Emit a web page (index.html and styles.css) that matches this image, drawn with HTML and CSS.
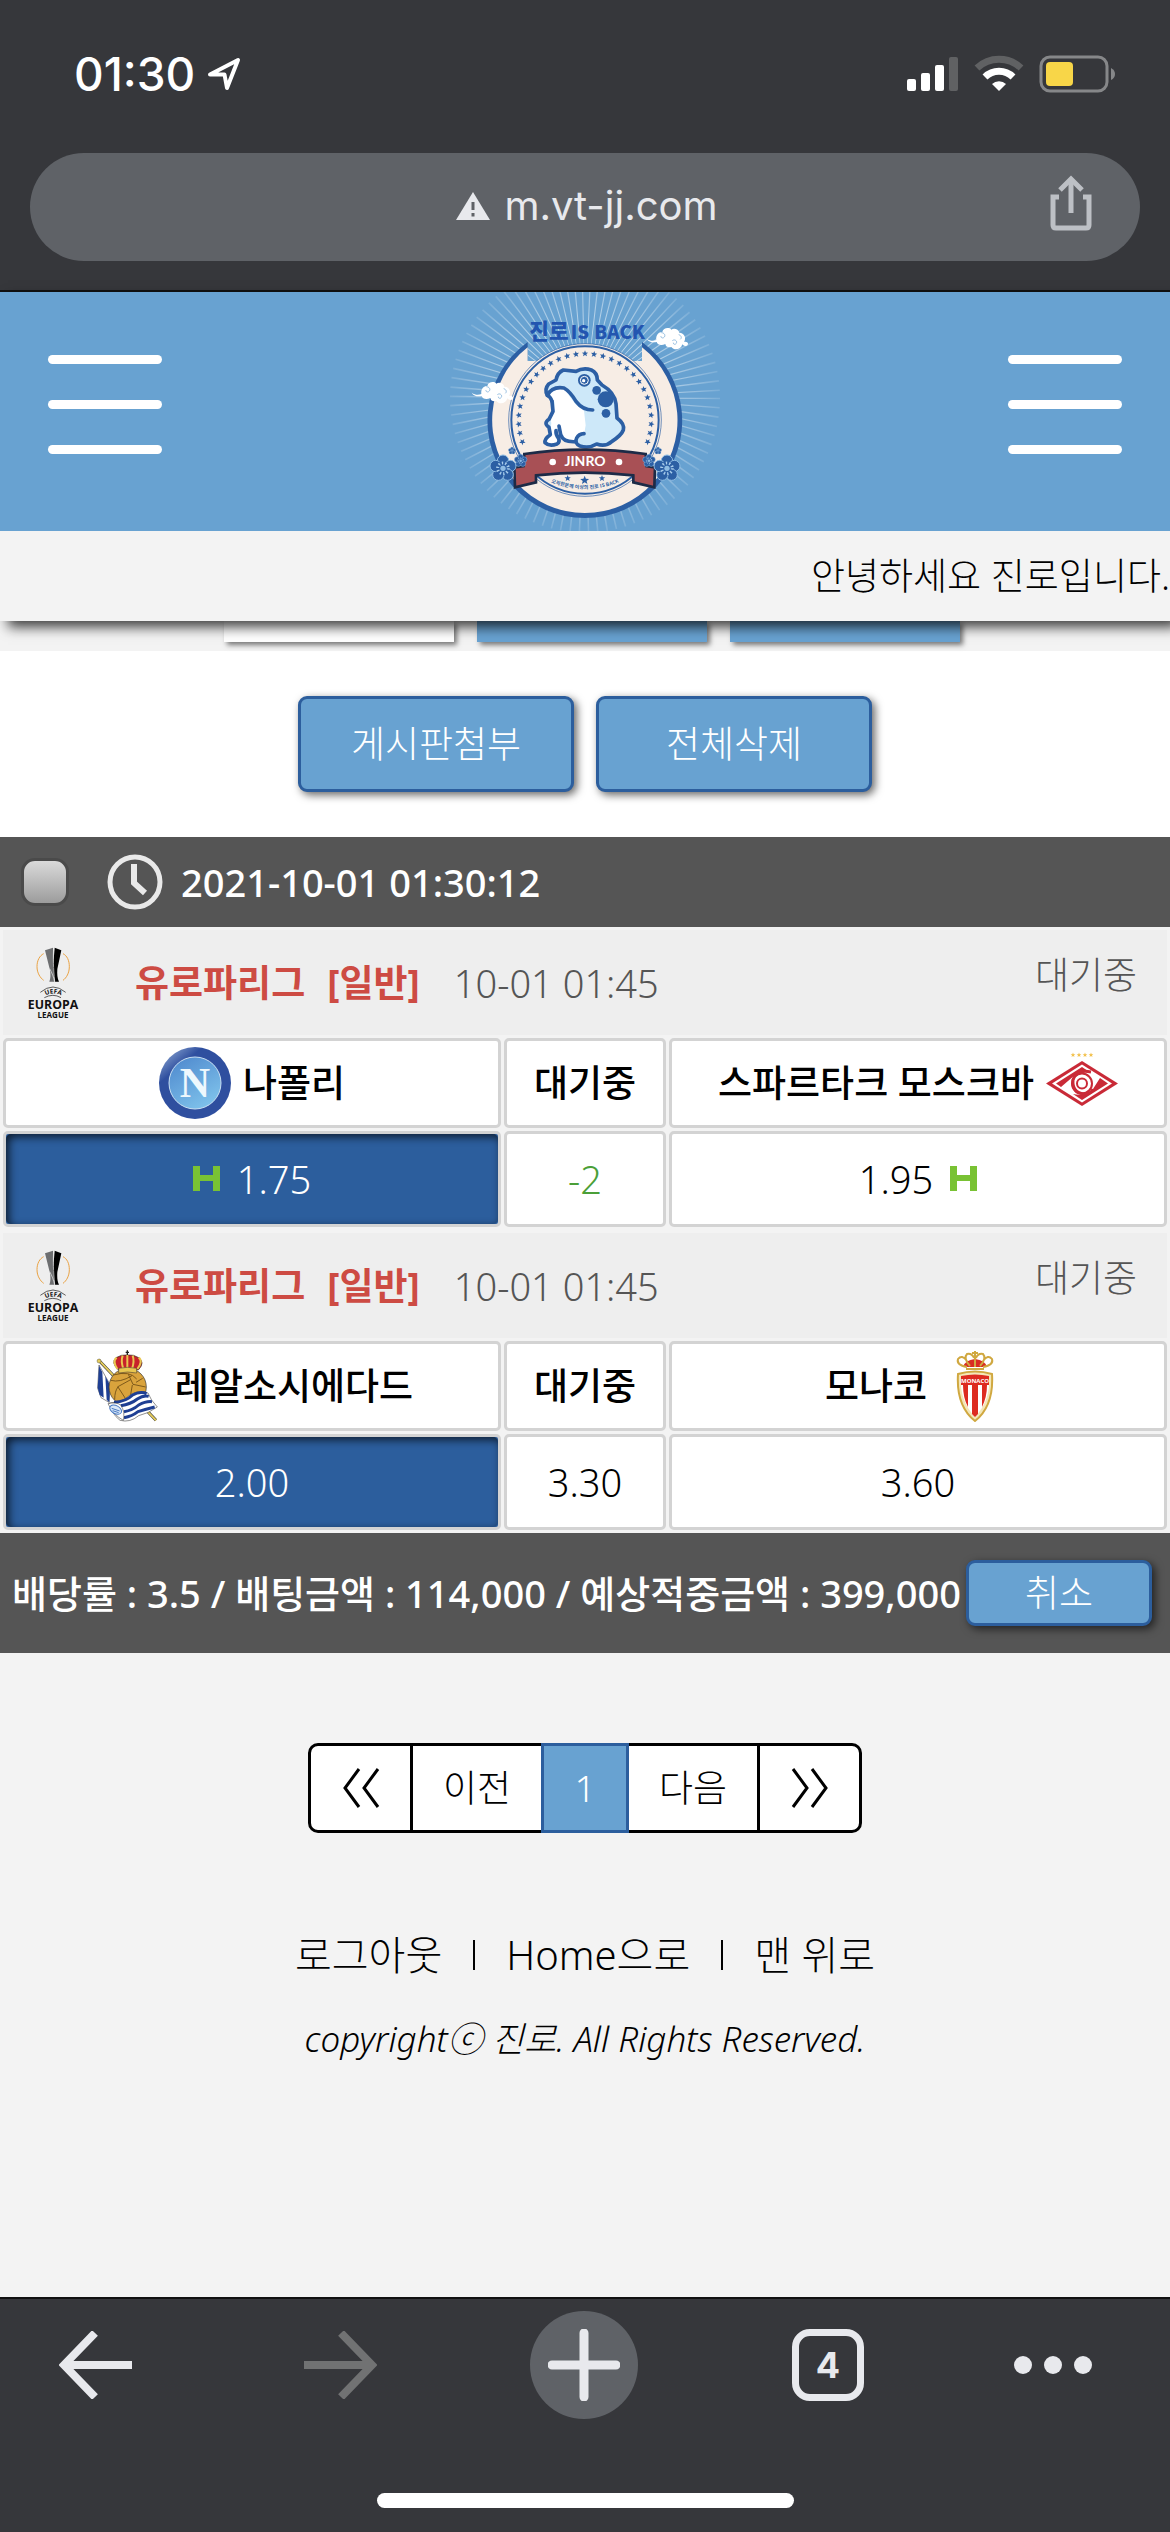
FILE: index.html
```
<!DOCTYPE html>
<html lang="ko">
<head>
<meta charset="utf-8">
<meta name="viewport" content="width=device-width, initial-scale=1">
<title>진로</title>
<link rel="stylesheet" href="styles.css">
</head>
<body>

<svg class="defs" width="0" height="0">
  <defs>
    <path id="star" d="M0-10 L2.6-3.4 9.5-3.1 4.1 1.3 5.9 8.1 0 4.3-5.9 8.1-4.1 1.3-9.5-3.1-2.6-3.4Z"/>
    <g id="stars7">
      <use href="#star" transform="rotate(7.8) translate(0 -199)"/>
      <use href="#star" transform="rotate(15.6) translate(0 -199)"/>
      <use href="#star" transform="rotate(23.4) translate(0 -199)"/>
      <use href="#star" transform="rotate(31.2) translate(0 -199)"/>
      <use href="#star" transform="rotate(39) translate(0 -199)"/>
      <use href="#star" transform="rotate(46.8) translate(0 -199)"/>
      <use href="#star" transform="rotate(54.6) translate(0 -199)"/>
    </g>
    <g id="flower">
      <g fill="#2c5fa4" stroke="#8fbce3" stroke-width="3">
        <circle cx="0" cy="-23" r="17"/>
        <circle cx="22" cy="-7" r="17"/>
        <circle cx="14" cy="19" r="17"/>
        <circle cx="-14" cy="19" r="17"/>
        <circle cx="-22" cy="-7" r="17"/>
      </g>
      <circle r="22" fill="#2c5fa4"/>
      <circle r="16" fill="none" stroke="#a9cdec" stroke-width="9" stroke-dasharray="4 6"/>
      <circle r="8" fill="#8fbce3"/>
    </g>
    <g id="cloud">
      <path fill="#fff" d="M620 146c10 7 20 8 29 4-2-14 6-24 18-24 2-11 19-16 27-7 7-6 22-2 24 9 15 0 22 16 14 28 12-3 16 8 8 11-7 2-11-1-13-4-4 16-24 20-33 8-9 3-17-1-18-9-12 6-24 2-26-6-12 3-24 0-30-10z"/>
      <path fill="none" stroke="#68a2d1" stroke-width="2" d="M664 128c9 0 13 8 9 13s-11 3-10-3M697 152c7-6 16 1 12 8-3 5-10 3-9-2M716 134c8 2 10 10 5 14"/>
    </g>
    <g id="europa">
      <path fill="none" stroke="#eaa243" stroke-width="3" d="M74 51c-12 6-20 20-20 39s10 34 20 41M132 51c12 6 19 20 19 39s-9 34-19 41"/>
      <path fill="#6d6e70" d="M78 41l24-8 2 60 2 42h-15c4-10 4-20 2-34z"/>
      <path fill="#000" d="M107 33l20 8-12 56c-1 16 0 28 5 38h-13l-5-42z"/>
      <path fill="none" stroke="#eee" stroke-width="2" d="M92 96c7 12 12 26 15 40M104 34c-2 30-1 60 3 100"/>
      <path fill="none" stroke="#111" stroke-width="2" d="M64 167q38-32 76 0M76 183q26-14 50 0"/>
      <g fill="#111" font-family="Open Sans" font-weight="700" text-anchor="middle">
        <path id="uefaArc" fill="none" d="M70 182q33-23 66 0"/>
        <text font-size="19"><textPath href="#uefaArc" startOffset="50%">UEFA</textPath></text>
        <text x="102" y="218" font-size="37">EUROPA</text>
        <text x="102" y="243" font-size="24">LEAGUE</text>
      </g>
    </g>
    <path id="handicap" fill="#79c234" d="M0 0h7v9h13V0h7v25h-7V15H7v10H0z"/>
  </defs>
</svg>

<div class="browser-top">
  <div class="status">
    <div class="clock">01:30
      <svg width="34" height="34" viewBox="0 0 34 34"><path d="M3 17.500 31 3 20 31 17.500 17.500z" fill="none" stroke="#fff" stroke-width="4" stroke-linejoin="round"/></svg>
    </div>
    <svg width="210" height="40" viewBox="906 54 210 40">
      <g fill="#fff">
        <rect x="907" y="79" width="9" height="12" rx="2"/>
        <rect x="921" y="73" width="9" height="18" rx="2"/>
        <rect x="935" y="65" width="9" height="26" rx="2"/>
        <rect x="949" y="57" width="9" height="34" rx="2" fill="#606163"/>
        <path d="M999 91l-7-7a10 10 0 0 1 14 0z"/>
      </g>
      <path fill="none" stroke="#606163" stroke-width="7" d="M977 68a32 32 0 0 1 44 0"/>
      <path fill="none" stroke="#fff" stroke-width="7" d="M985 77a20 20 0 0 1 28 0"/>
      <rect x="1041" y="57" width="66" height="34" rx="9" fill="none" stroke="#868789" stroke-width="3"/>
      <rect x="1046" y="62" width="27" height="24" rx="4" fill="#f8d648"/>
      <path fill="#868789" d="M1111 68q4 2 4 6t-4 6z"/>
    </svg>
  </div>
  <div class="urlbar">
    <div class="url">
      <svg width="34" height="30" viewBox="0 0 34 30"><path d="M17 1 34 29H0z" fill="#e8e9ed"/><path d="M15.500 11h3v8h-3zM15.500 22h3v3.500h-3z" fill="#5f6267"/></svg>
      <span>m.vt-jj.com</span>
    </div>
    <button class="share">
      <svg width="42" height="56" viewBox="0 0 42 56"><g fill="none" stroke="#bdc0c5" stroke-width="5"><path d="M9 22H3v28q0 3 3 3h30q3 0 3-3V22h-6M21 38V6"/><path d="M10 15 21 4l11 11"/></g></svg>
    </button>
  </div>
</div>

<header>
  <div class="gnb">
    <button class="menu"><i></i><i></i><i></i></button>
    <a href="#" class="logo">
      <svg width="300" height="239" viewBox="-15 6 900 717">
        <defs>
          <radialGradient id="ray" gradientUnits="userSpaceOnUse" cx="435" cy="323" r="410">
            <stop offset=".5" stop-color="#fff" stop-opacity=".6"/>
            <stop offset="1" stop-color="#fff" stop-opacity=".12"/>
          </radialGradient>
        </defs>
        <circle cx="435" cy="323" r="275" fill="none" stroke="url(#ray)" stroke-width="260" pathLength="720" stroke-dasharray="1.4 6.6"/>
        <path d="M263 156A292 292 0 1 0 606 156V213H263z" fill="#2c5fa4"/>
        <path d="M263 172A278 278 0 1 0 606 172V213H263z" fill="#f7ede5"/>
        <circle cx="435" cy="390" r="229" fill="#f7ede5" stroke="#2c5fa4" stroke-width="2"/>
        <circle cx="435" cy="390" r="221" fill="none" stroke="#2c5fa4" stroke-width="6"/>
        <g fill="#2355b0" font-family="Noto Sans CJK KR" font-weight="900">
          <text x="268" y="148" font-size="64">진로</text>
          <text x="392" y="146" font-size="56">IS BACK</text>
        </g>
        <g fill="#2c5fa4" transform="translate(435 390)">
          <use href="#star" y="-199"/>
          <use href="#stars7"/>
          <use href="#stars7" transform="rotate(54.6)"/>
          <g transform="scale(-1 1)">
            <use href="#stars7"/>
            <use href="#stars7" transform="rotate(54.6)"/>
          </g>
        </g>
        <!-- toad -->
        <path fill="#cde8f9" d="M318 302q-3-14 8-21l20-10q6-24 24-30l40 3q22-12 46-3 16 8 16 30l12 16q38 20 44 56l2 40q26 16 22 38-6 16-32 34-20 16-46 8-22 14-50 6-12-4-14-12-24 4-42-10l-14-40-4 32q12 12 5 20-15 10-37 2-6-14 6-26l4-28q-12-12-4-26l14-6 2-44z"/>
        <path fill="#fff" d="M328 310q18-22 46-14 12 20 34 48l24 18 5 44-4 24-25 20q-24 4-42-10l-10-40-6 40q8 10 0 18-14 8-28 0-3-10 8-20l4-40-8-24 16-6 2-30z"/>
        <g fill="none" stroke="#2c5fa4" stroke-width="11" stroke-linecap="round" stroke-linejoin="round">
          <path d="M336 334q-4-14-14-18-10-18 4-34l22-12q4-22 22-30l38 4q22-12 46-4 18 8 18 30l14 15q38 22 42 56l3 43q24 18 19 36-6 16-34 34-20 18-46 8-22 14-50 6-18-8-10-24 6-12 22-13"/>
          <path d="M322 316q14-28 50-22 18 10 36 40 20 26 50 26M336 334l3 30-12 24q-18 12 0 24l4 22q-18 12-16 24 12 12 36 4 10-6 4-18-8-10-7-22M357 408l5 26q8 24 46 21"/>
        </g>
        <g fill="#2c5fa4">
          <circle cx="470" cy="301" r="13"/>
          <circle cx="497" cy="328" r="24"/>
          <circle cx="498" cy="370" r="13"/>
          <circle cx="433" cy="271" r="19"/>
          <circle cx="433" cy="271" r="12" stroke="#fff" stroke-width="3"/>
          <circle cx="431" cy="272" r="5" fill="#fff"/>
        </g>
        <path fill="#a85055" stroke="#1d2b47" stroke-width="8" d="M253 492q182-26 364 0l2 36 26 4-2 60-63-15v-21q-146-16-292 0v21l-63 15-2-60 28-4z"/>
        <text x="435" y="529" fill="#fff" font-family="Lato" font-weight="700" font-size="42" text-anchor="middle">JINRO</text>
        <circle cx="338" cy="516" r="10" fill="#fff"/>
        <circle cx="537" cy="516" r="10" fill="#fff"/>
        <g fill="#2c5fa4">
          <use href="#star" x="383" y="565"/>
          <use href="#star" transform="translate(434 571) scale(1.4)"/>
          <use href="#star" x="486" y="565"/>
          <path id="motto" fill="none" d="M325 574q110 46 220 0"/>
          <text font-family="Noto Sans CJK KR" font-weight="700" font-size="15" text-anchor="middle"><textPath href="#motto" startOffset="50%">오직한분께 이상의 진로 IS BACK</textPath></text>
        </g>
        <use href="#flower" x="189" y="535"/>
        <use href="#flower" x="681" y="535"/>
        <use href="#flower" transform="translate(242 512) scale(.48)"/>
        <use href="#flower" transform="translate(627 512) scale(.48)"/>
        <use href="#flower" transform="translate(216 482) scale(.28)"/>
        <use href="#flower" transform="translate(654 482) scale(.28)"/>
        <use href="#cloud"/>
        <use href="#cloud" x="-525" y="162"/>
      </svg>
    </a>
    <button class="menu"><i></i><i></i><i></i></button>
  </div>
  <div class="notice">안녕하세요 진로입니다.</div>
</header>

<main>
  <nav class="tabs">
    <a href="#" class="on"></a>
    <a href="#"></a>
    <a href="#"></a>
  </nav>

  <div class="actions">
    <button class="btn">게시판첨부</button>
    <button class="btn">전체삭제</button>
  </div>

  <section class="slip">
    <div class="slip-head">
      <label>
        <input type="checkbox">
        <svg width="56" height="56" viewBox="0 0 56 56"><g fill="none" stroke="#e9e9e9" stroke-width="5"><circle cx="28" cy="28" r="25"/><path d="M27 10v19l11 10" stroke-width="6"/></g></svg>
        <span>2021-10-01 01:30:12</span>
      </label>
    </div>

    <table class="match">
      <colgroup><col><col class="mid"><col></colgroup>
      <tr>
        <th colspan="3" class="league">
          <div>
            <svg width="60" height="76" viewBox="15 25 180 228"><use href="#europa"/></svg>
            <strong>유로파리그</strong>
            <strong>[일반]</strong>
            <span class="when">10-01 01:45</span>
            <span class="state">대기중</span>
          </div>
        </th>
      </tr>
      <tr class="teams">
        <td>
          <div>
            <svg width="72" height="72" viewBox="0 0 72 72">
              <defs>
                <linearGradient id="nap" x2=".6" y2="1"><stop offset="0" stop-color="#4c86cc"/><stop offset="1" stop-color="#7dc0ea"/></linearGradient>
                <linearGradient id="napRim" x2=".5" y2=".6"><stop offset=".1" stop-color="#8ea9d3"/><stop offset=".5" stop-color="#2f4f9f"/></linearGradient>
              </defs>
              <circle cx="36" cy="36" r="36" fill="url(#napRim)"/>
              <circle cx="36" cy="36" r="26" fill="url(#nap)" stroke="#c9dff2" stroke-width="1"/>
              <text x="36" y="50" fill="#eef8fd" font-family="Liberation Serif" font-weight="700" font-size="42" text-anchor="middle">N</text>
            </svg>
            나폴리
          </div>
        </td>
        <td>대기중</td>
        <td>
          <div>
            스파르타크 모스크바
            <svg width="72" height="72" viewBox="0 0 72 72">
              <path fill="#c92a37" d="M36 14 72 36.500 36 59 0 36.500z"/>
              <path fill="#fff" d="M36 17.500 66 36.500 36 55.500 6 36.500z"/>
              <path fill="#c92a37" d="M10 36.500 36 20l9 6q-11-3-16 2L15 40zM27 47q12 3 20-5l7-11 8 5.500L36 53z"/>
              <circle cx="36" cy="36.500" r="10" fill="#fff" stroke="#c92a37" stroke-width="2"/>
              <path fill="none" stroke="#c92a37" stroke-width="3" d="M45 25q-15-3-18 8-1 13 11 14 7 0 9-5"/>
              <circle cx="36" cy="36.500" r="5" fill="none" stroke="#c92a37" stroke-width="2"/>
              <g fill="#f2c04a"><use href="#star" transform="translate(27 8) scale(.25)"/><use href="#star" transform="translate(33 8) scale(.25)"/><use href="#star" transform="translate(39 8) scale(.25)"/><use href="#star" transform="translate(45 8) scale(.25)"/></g>
            </svg>
          </div>
        </td>
      </tr>
      <tr class="odds">
        <td class="picked"><div><svg width="32" height="26" viewBox="0 0 32 26"><use href="#handicap"/></svg>1.75</div></td>
        <td class="line">-2</td>
        <td><div>1.95<svg width="32" height="26" viewBox="-5 0 32 26"><use href="#handicap"/></svg></div></td>
      </tr>
    </table>

    <table class="match">
      <colgroup><col><col class="mid"><col></colgroup>
      <tr>
        <th colspan="3" class="league">
          <div>
            <svg width="60" height="76" viewBox="15 25 180 228"><use href="#europa"/></svg>
            <strong>유로파리그</strong>
            <strong>[일반]</strong>
            <span class="when">10-01 01:45</span>
            <span class="state">대기중</span>
          </div>
        </th>
      </tr>
      <tr class="teams">
        <td>
          <div>
            <svg width="72" height="72" viewBox="33 37 216 216">
              <path d="M55 66 228 248" stroke="#333" stroke-width="9"/>
              <path d="M55 66 228 248" stroke="#e6cd5c" stroke-width="6"/>
              <circle cx="57" cy="70" r="6" fill="#e6cd5c" stroke="#333"/>
              <path fill="#fff" stroke="#222" stroke-width="1.500" d="M57 82l34 60-4 52-24-14-10-28z"/>
              <path fill="#1f3f93" d="M57 84l10 20 4 76-12-8-6-22zM76 116l14 26-2 52-8-8z"/>
              <circle cx="143" cy="148" r="56" fill="#d9a33c" stroke="#333" stroke-width="2"/>
              <path fill="none" stroke="#6b4a14" stroke-width="2.500" d="M92 128q28 8 64-14M100 112q50-14 70 12M145 110l14 30 38 8M112 148l40-22M104 186q0-26 10-38l22 34M157 142l-6 34M168 134l20-12"/>
              <path fill="#c8222b" stroke="#2d2413" stroke-width="2" d="M114 96q-22-22-6-36 16-10 34-8 20-2 34 8 20 14 0 36z"/>
              <path fill="none" stroke="#e8c650" stroke-width="6" d="M112 94q-16-24-2-34M130 94q-8-24-2-40M142 94V52M156 94q8-24 2-40M172 94q18-24 4-34"/>
              <path fill="#e8c650" stroke="#333" stroke-width="1.500" d="M116 92q27-6 54 0v14q-27-6-54 0z"/>
              <path stroke="#222" stroke-width="4" d="M142 38v14M137 44h10"/>
              <path fill="#fff" stroke="#222" stroke-width="1.500" d="M88 196q40-2 62-24 30-18 54-6 8 22 28 42-28 20-56 26-26 22-56 14-26-20-32-52z"/>
              <g fill="none" stroke="#1f3f93" stroke-width="9">
                <path d="M102 194q36-2 56-22 22-12 42-4M122 204q30-4 50-20 18-12 34-8M132 222q26-4 44-20 22-12 40-10M132 240q24-4 42-18 26-8 50-14"/>
              </g>
              <path fill="#fff" stroke="#222" stroke-width="1.500" d="M84 198q24-6 38 4 14 20 8 46-30-16-46-50z"/>
              <ellipse cx="107" cy="216" rx="19" ry="12" transform="rotate(28 107 216)" fill="#dbe9f8" stroke="#4779c4" stroke-width="3"/>
              <path stroke="#4779c4" stroke-width="3" d="M95 212l24 8M98 219l18 6"/>
            </svg>
            레알소시에다드
          </div>
        </td>
        <td>대기중</td>
        <td>
          <div>
            모나코
            <svg width="72" height="72" viewBox="0 0 72 72">
              <path fill="#d92b22" d="M24 17q2-7 12-8 10 1 12 8z"/>
              <path fill="none" stroke="#d0a840" stroke-width="2" d="M28 17q-11-2-9-8 4-5 9 2M44 17q11-2 9-8-4-5-9 2M31 16q-7-8-3-12 5-1 7 4M41 16q7-8 3-12-5-1-7 4M36 1v16M33 3h6"/>
              <path stroke="#d0a840" stroke-width="2" d="M27 19h18"/>
              <path fill="#f4e7b8" stroke="#d0a840" stroke-width="2" d="M19 24q17-5 34 0 2 32-17 47-19-15-17-47z"/>
              <path fill="#fff" d="M22 26h28q2 24-14 41-16-17-14-41z"/>
              <path fill="#dd2b20" d="M22 26q14-3 28 0v9H22zM24 35h5v22q-5-9-5-22zM33 35h6v29l-3 3-3-3zM43 35h5q0 12-5 22z"/>
              <text x="36" y="33" fill="#fff" font-family="Open Sans" font-weight="700" font-size="6" text-anchor="middle">MONACO</text>
            </svg>
          </div>
        </td>
      </tr>
      <tr class="odds">
        <td class="picked">2.00</td>
        <td>3.30</td>
        <td>3.60</td>
      </tr>
    </table>

    <div class="slip-foot">
      <span>배당률 : 3.5 / 배팅금액 : 114,000 / 예상적중금액 : 399,000</span>
      <button class="btn small">취소</button>
    </div>
  </section>

  <nav class="paging">
    <a href="#"><svg width="38" height="40" viewBox="0 0 38 40"><path d="M17 1 3 20l14 19M36 1 22 20l14 19"/></svg></a>
    <a href="#">이전</a>
    <a href="#" class="on">1</a>
    <a href="#">다음</a>
    <a href="#"><svg width="38" height="40" viewBox="0 0 38 40"><path d="M2 1l14 19L2 39M21 1l14 19-14 19"/></svg></a>
  </nav>

  <footer>
    <div class="links">
      <a href="#">로그아웃</a><i></i><a href="#">Home으로</a><i></i><a href="#">맨 위로</a>
    </div>
    <p>copyrightⓒ 진로. All Rights Reserved.</p>
  </footer>
</main>

<div class="browser-bottom">
  <div class="toolbar">
    <button><svg width="74" height="68" viewBox="0 0 74 68"><path d="M73 34H6M36 2 5 34l31 32" fill="none" stroke="#e8e9ed" stroke-width="8"/></svg></button>
    <button><svg width="74" height="68" viewBox="0 0 74 68"><path d="M1 34h67M38 2l31 32-31 32" fill="none" stroke="#717273" stroke-width="8"/></svg></button>
    <button class="plus"><svg width="72" height="72" viewBox="0 0 72 72"><path d="M36 4v64M4 36h64" stroke="#e8e9ed" stroke-width="9" stroke-linecap="round"/></svg></button>
    <button><span class="count">4</span></button>
    <button class="more"><svg width="78" height="18" viewBox="0 0 78 18"><g fill="#e8e9ed"><circle cx="9" cy="9" r="9"/><circle cx="39" cy="9" r="9"/><circle cx="69" cy="9" r="9"/></g></svg></button>
  </div>
  <div class="home"></div>
</div>

</body>
</html>
```
FILE: styles.css
```
* { box-sizing: border-box; }
body { margin: 0; min-height: 100vh; display: flex; flex-direction: column; background: #f3f3f3; color: #000; font: 300 37px/44px "Noto Sans", "Noto Sans CJK KR", sans-serif; }
a { color: inherit; text-decoration: none; }
button { margin: 0; padding: 0; border: 0; background: none; color: inherit; font: inherit; cursor: pointer; }
svg { display: block; flex: none; }
.defs { position: absolute; }

.browser-top { height: 292px; background: #36373b; border-bottom: 2px solid #111; color: #fff; font-family: Inter, sans-serif; }
.status { display: flex; justify-content: space-between; align-items: center; height: 148px; padding: 0 54px 0 74px; }
.clock { display: flex; align-items: center; gap: 12px; font-size: 46px; font-weight: 500; }
.urlbar { position: relative; display: flex; align-items: center; justify-content: center; height: 108px; margin: 5px 30px 0; border-radius: 54px; background: #5f6267; }
.url { display: flex; align-items: center; gap: 14px; margin: 0 0 3px 4px; color: #e8e9ed; font-size: 40px; font-weight: 400; }
.share { position: absolute; right: 48px; top: 22px; }

header { position: relative; z-index: 1; box-shadow: 8px 6px 12px rgba(0,0,0,.75); }
.gnb { display: flex; justify-content: space-between; align-items: center; height: 239px; padding: 0 48px; background: #68a2d1; }
.menu { display: flex; flex-direction: column; gap: 36px; width: 114px; margin-bottom: 14px; }
.menu i { height: 9px; border-radius: 5px; background: #fff; }
.logo { align-self: stretch; }
.notice { height: 90px; line-height: 90px; background: #f3f3f3; text-align: right; overflow: hidden; white-space: nowrap; }

main { flex: 1; }
.tabs { display: flex; justify-content: center; gap: 23px; height: 30px; padding-left: 13px; }
.tabs a { width: 230px; height: 21px; background: #68a2d1; box-shadow: 3px 3px 5px rgba(0,0,0,.5); }
.tabs a.on { background: #fff; }

.actions { display: flex; justify-content: center; gap: 22px; padding: 45px 0; background: #fff; }
.btn { width: 276px; height: 96px; border: 3px solid #2c5e9d; border-radius: 9px; background: #68a2d1; color: #fff; box-shadow: 3px 3px 8px rgba(0,0,0,.6); }
.btn.small { flex: none; width: 186px; height: 66px; }

.slip-head { background: #555; color: #fff; }
.slip-head label { display: flex; align-items: center; height: 90px; padding-left: 21px; font-size: 38px; font-weight: 500; }
.slip-head input { appearance: none; width: 48px; height: 48px; margin: 0 38px 0 0; border: 3px solid #4a4a4a; border-radius: 14px; background: linear-gradient(#dadada, #9c9c9c); }
.slip-head span { margin-left: 18px; }

.match { width: 100%; table-layout: fixed; border-spacing: 3px; }
.match .mid { width: 162px; }
.match td, .match th { padding: 0; text-align: center; }
.match td { border: 3px solid #d3d3d3; border-radius: 5px; background: #fff; }
.match td div { display: flex; align-items: center; justify-content: center; gap: 12px; }
.league { height: 105px; background: #eee; color: #555; font-weight: 300; }
.league div { display: flex; align-items: center; height: 105px; padding: 0 30px 0 21px; }
.league strong { margin-right: 22px; color: #cd4b43; font-weight: 700; }
.league svg { margin-right: 51px; }
.league .when { margin-left: 12px; font-size: 38px; }
.league .state { margin: 0 0 16px auto; }
.teams td { height: 90px; font-weight: 500; }
.odds td { height: 96px; font-size: 38px; }
.odds .picked { background: #2c5e9d; color: #fff; box-shadow: inset 3px 3px 8px rgba(0,0,0,.7); }
.odds .line { color: #4b9f38; }

.slip-foot { display: flex; align-items: center; justify-content: space-between; height: 120px; padding: 0 18px 0 12px; background: #555; color: #fff; font-size: 38px; font-weight: 500; white-space: nowrap; }
.slip-foot .btn { font-size: 37px; font-weight: 300; }

.paging { display: flex; justify-content: center; margin-top: 90px; }
.paging a { display: flex; align-items: center; justify-content: center; width: 134px; height: 90px; margin-left: -3px; border: 3px solid #000; background: #fff; }
.paging a:first-child { width: 105px; margin-left: 0; border-radius: 10px 0 0 10px; }
.paging a:last-child { width: 105px; border-radius: 0 10px 10px 0; }
.paging a.on { position: relative; width: 88px; border-color: #2c5e9d; background: #68a2d1; color: #fff; }
.paging svg { fill: none; stroke: #000; stroke-width: 3; }

footer { padding: 100px 0; text-align: center; }
.links { display: flex; align-items: center; justify-content: center; font-size: 40px; }
.links i { width: 2px; height: 30px; margin: 0 31px; background: #000; }
footer p { margin: 40px 0 0; font-size: 35px; font-style: italic; }

.browser-bottom { height: 235px; border-top: 2px solid #111; background: #36373b; color: #e8e9ed; }
.toolbar { display: flex; align-items: center; justify-content: space-between; height: 132px; padding: 0 82px 0 42px; }
.toolbar button { display: flex; align-items: center; justify-content: center; width: 108px; height: 108px; }
.toolbar .plus { border-radius: 50%; background: #5f6267; }
.toolbar .more { width: 70px; }
.count { width: 72px; height: 72px; border: 7px solid #e8e9ed; border-radius: 18px; font: 700 36px/58px Inter, sans-serif; }
.home { width: 417px; height: 15px; margin: 62px auto 0; border-radius: 8px; background: #fff; }
```
